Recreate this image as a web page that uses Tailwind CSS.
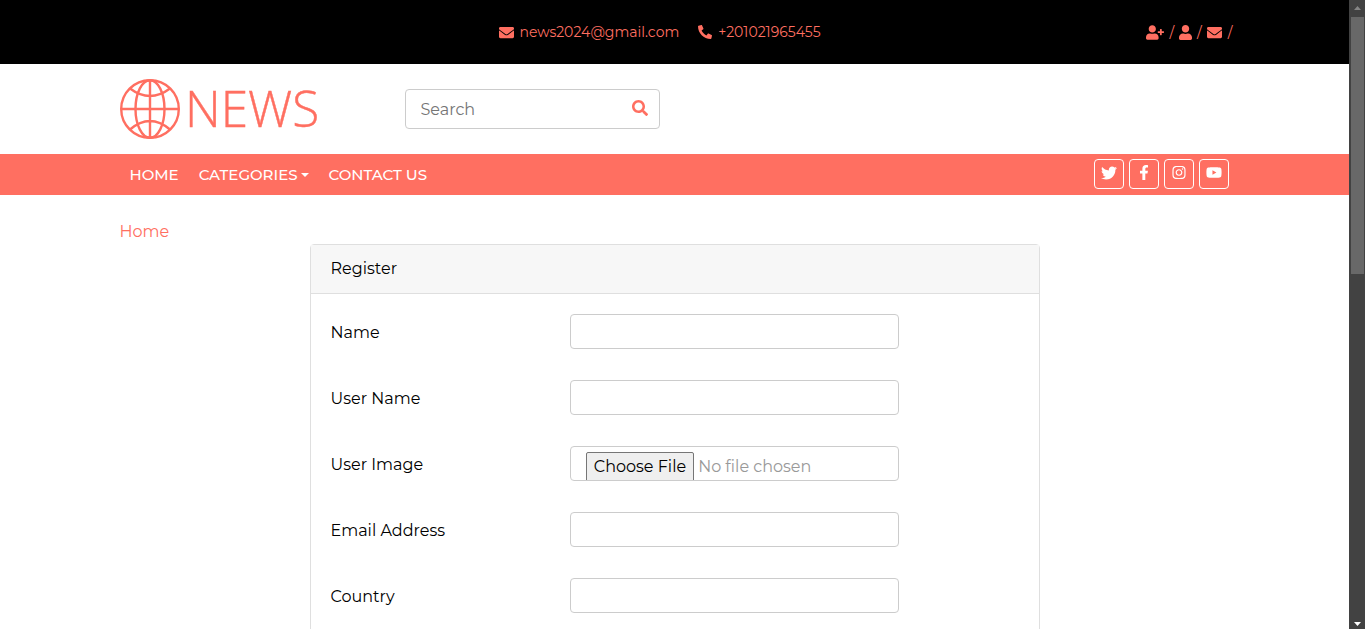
<!DOCTYPE html>
<html lang="en">
<head>
<meta charset="utf-8">
<meta name="viewport" content="width=device-width, initial-scale=1">
<title>News - Register</title>
<script src="https://cdn.jsdelivr.net/npm/@tailwindcss/browser@4"></script>
</head>
<body class="flex h-screen overflow-hidden bg-white font-[Montserrat,Inter,sans-serif] text-base text-black">
<svg class="hidden" aria-hidden="true">
  <symbol id="envelope" viewBox="0 0 512 512"><path d="M502.300 190.800c3.900-3.100 9.700-.2 9.700 4.700V400c0 26.500-21.500 48-48 48H48c-26.500 0-48-21.500-48-48V195.600c0-5 5.700-7.800 9.700-4.700 22.400 17.400 52.100 39.500 154.100 113.600 21.100 15.400 56.700 47.800 92.200 47.600 35.700.3 72-32.800 92.300-47.600 102-74.100 131.600-96.300 154-113.700zM256 320c23.200.4 56.600-29.200 73.400-41.400 132.700-96.300 142.800-104.700 173.400-128.700 5.800-4.500 9.200-11.500 9.200-18.900v-19c0-26.500-21.500-48-48-48H48c-26.500 0-48 21.500-48 48v19c0 7.400 3.400 14.300 9.200 18.900 30.600 23.900 40.700 32.400 173.400 128.700 16.800 12.200 50.200 41.800 73.400 41.400z"/></symbol>
  <symbol id="user" viewBox="0 0 448 512"><path d="M224 256c70.700 0 128-57.300 128-128S294.700 0 224 0 96 57.300 96 128s57.300 128 128 128zm89.600 32h-16.700c-22.200 10.200-46.900 16-72.900 16s-50.600-5.800-72.900-16h-16.700C60.200 288 0 348.200 0 422.400V464c0 26.500 21.500 48 48 48h352c26.500 0 48-21.500 48-48v-41.600c0-74.200-60.200-134.400-134.400-134.400z"/></symbol>
</svg>

<div class="min-w-0 flex-1">
  <div class="bg-black text-sm text-[#ff6f61]">
    <div class="mx-auto flex h-16 max-w-[1140px] items-center px-[15px]">
      <div class="w-[379px] shrink"></div>
      <div class="flex flex-1 items-center gap-[19px] whitespace-nowrap">
        <a href="mailto:news2024@gmail.com" class="flex items-center gap-[6px]"><svg class="size-[15px]" fill="currentColor"><use href="#envelope"/></svg>news2024@gmail.com</a>
        <a href="tel:+201021965455" class="flex items-center gap-[6px]"><svg class="size-[14px]" fill="currentColor" viewBox="0 0 512 512"><path d="M493.400 24.600l-104-24c-11.300-2.600-22.900 3.300-27.500 13.900l-48 112c-4.200 9.800-1.400 21.300 6.900 28l60.600 49.600c-36 76.700-98.900 140.500-177.200 177.200l-49.600-60.600c-6.800-8.300-18.200-11.100-28-6.900l-112 48C3.900 366.500-2 378.100.6 389.400l24 104C27.100 504.200 36.700 512 48 512c256.100 0 464-207.500 464-464 0-11.200-7.700-20.900-18.600-23.400z" transform="matrix(-1 0 0 1 512 0)"/></svg>+201021965455</a>
      </div>
      <div class="-mr-[3px] flex items-center gap-[5px]">
        <a href="#register" aria-label="Register"><svg class="h-[15px] w-[18px]" fill="currentColor" viewBox="0 0 640 512"><path d="M624 208h-64v-64c0-8.800-7.200-16-16-16h-32c-8.800 0-16 7.200-16 16v64h-64c-8.800 0-16 7.200-16 16v32c0 8.800 7.200 16 16 16h64v64c0 8.800 7.200 16 16 16h32c8.800 0 16-7.200 16-16v-64h64c8.800 0 16-7.200 16-16v-32c0-8.800-7.200-16-16-16zm-400 48c70.700 0 128-57.300 128-128S294.700 0 224 0 96 57.300 96 128s57.300 128 128 128zm89.600 32h-16.700c-22.200 10.200-46.900 16-72.900 16s-50.600-5.800-72.900-16h-16.700C60.200 288 0 348.200 0 422.400V464c0 26.500 21.500 48 48 48h352c26.500 0 48-21.500 48-48v-41.600c0-74.200-60.200-134.400-134.400-134.400z"/></svg></a><span>/</span>
        <a href="#login" aria-label="Log in"><svg class="h-[15px] w-[13px]" fill="currentColor"><use href="#user"/></svg></a><span>/</span>
        <a href="#contact" aria-label="Contact" class="pr-px"><svg class="size-[15px]" fill="currentColor"><use href="#envelope"/></svg></a><span>/</span>
      </div>
    </div>
  </div>

  <div class="mx-auto flex h-[90px] max-w-[1140px] items-center px-[15px]">
    <a href="#home" aria-label="News home" class="w-[285px]">
      <svg class="h-[60px] w-[210px] overflow-visible" viewBox="0 0 210 60" fill="none" stroke="#ff6f61" stroke-width="2.4">
        <circle cx="30" cy="30" r="28.800"/>
        <ellipse cx="30" cy="30" rx="14.500" ry="28.800"/>
        <path d="M30 1v58M1 30h58M10 9.500q20 15 40 0M10 50.500q20-17 40 0"/>
        <text x="65" y="48" font-family="Open Sans" font-weight="300" font-size="49.500" fill="#ff6f61" stroke-width="0.4">NEWS</text>
      </svg>
    </a>
    <form class="relative w-[255px]" onsubmit="return false">
      <input type="text" placeholder="Search" aria-label="Search" class="h-10 w-full rounded border border-[#cccccc] px-[15px] placeholder:text-[#757575]">
      <button type="submit" aria-label="Search" class="absolute top-[11px] right-3 text-[#ff6f61]"><svg class="size-4" fill="currentColor" viewBox="0 0 512 512"><path d="M505 442.700L405.300 343c-4.500-4.500-10.600-7-17-7H372c27.600-35.300 44-79.700 44-128C416 93.100 322.900 0 208 0S0 93.100 0 208s93.100 208 208 208c48.300 0 92.700-16.400 128-44v16.300c0 6.400 2.500 12.500 7 17l99.700 99.700c9.400 9.400 24.600 9.400 33.900 0l28.300-28.300c9.400-9.400 9.400-24.600.1-34zM208 336c-70.700 0-128-57.200-128-128 0-70.700 57.200-128 128-128 70.700 0 128 57.200 128 128 0 70.700-57.200 128-128 128z"/></svg></button>
    </form>
  </div>

  <div class="bg-[#ff6f61] text-white">
    <div class="mx-auto flex h-[41px] max-w-[1140px] items-start justify-between px-[15px]">
      <nav class="flex pt-[10px] text-[15px]/[22px] font-medium">
        <a href="#home" class="px-[10px]">HOME</a>
        <button type="button" class="flex items-center gap-[3px] px-[10px]">CATEGORIES<svg class="h-1 w-2" viewBox="0 0 8 4" fill="currentColor"><path d="M0 0h8L4 4z"/></svg></button>
        <a href="#contact" class="px-[10px]">CONTACT US</a>
      </nav>
      <div class="mr-px flex gap-[5px] pt-[5px]">
        <a href="#twitter" aria-label="Twitter" class="flex h-[30px] w-[30px] justify-center rounded border border-white pt-[5px]"><svg class="size-4" fill="currentColor" viewBox="0 0 512 512"><path d="M459.370 151.716c.325 4.548.325 9.097.325 13.645 0 138.720-105.583 298.558-298.558 298.558-59.452 0-114.680-17.219-161.137-47.106 8.447.974 16.568 1.299 25.340 1.299 49.055 0 94.213-16.568 130.274-44.832-46.132-.975-84.792-31.188-98.112-72.772 6.498.974 12.995 1.624 19.818 1.624 9.421 0 18.843-1.300 27.614-3.573-48.081-9.747-84.143-51.980-84.143-102.985v-1.299c13.969 7.797 30.214 12.670 47.431 13.319-28.264-18.843-46.781-51.005-46.781-87.391 0-19.492 5.197-37.360 14.294-52.954 51.655 63.675 129.300 105.258 216.365 109.807-1.624-7.797-2.599-15.918-2.599-24.040 0-57.828 46.782-104.934 104.934-104.934 30.213 0 57.502 12.670 76.670 33.137 23.715-4.548 46.456-13.320 66.599-25.340-7.798 24.366-24.366 44.833-46.132 57.827 21.117-2.273 41.584-8.122 60.426-16.243-14.292 20.791-32.161 39.308-52.628 54.253z"/></svg></a>
        <a href="#facebook" aria-label="Facebook" class="flex h-[30px] w-[30px] justify-center rounded border border-white pt-[5px]"><svg class="h-[15px] w-4" fill="currentColor" viewBox="0 0 320 512"><path d="M279.140 288l14.220-92.660h-88.910v-60.130c0-25.350 12.420-50.060 52.240-50.060h40.420V6.260S260.430 0 225.360 0c-73.220 0-121.080 44.380-121.080 124.720v70.620H22.890V288h81.390v224h100.170V288z"/></svg></a>
        <a href="#instagram" aria-label="Instagram" class="flex h-[30px] w-[30px] justify-center rounded border border-white pt-[5px]"><svg class="h-[15px] w-4" fill="currentColor" viewBox="0 0 448 512"><path d="M224.100 141c-63.600 0-114.900 51.300-114.900 114.900s51.300 114.900 114.900 114.900S339 319.500 339 255.900 287.700 141 224.100 141zm0 189.600c-41.100 0-74.700-33.500-74.700-74.700s33.500-74.700 74.700-74.700 74.700 33.500 74.700 74.700-33.600 74.700-74.700 74.700zm146.400-194.300c0 14.900-12 26.800-26.800 26.800-14.900 0-26.800-12-26.800-26.800s12-26.800 26.800-26.800 26.800 12 26.800 26.800zm76.100 27.200c-1.700-35.900-9.900-67.700-36.200-93.900-26.200-26.200-58-34.400-93.900-36.200-37-2.100-147.900-2.100-184.900 0-35.800 1.700-67.600 9.900-93.900 36.100s-34.400 58-36.200 93.900c-2.100 37-2.100 147.900 0 184.900 1.700 35.900 9.900 67.700 36.200 93.900s58 34.400 93.900 36.200c37 2.100 147.900 2.100 184.900 0 35.900-1.700 67.700-9.900 93.900-36.200 26.200-26.200 34.400-58 36.200-93.900 2.100-37 2.100-147.800 0-184.800zM398.800 388c-7.800 19.600-22.900 34.700-42.600 42.600-29.500 11.700-99.500 9-132.100 9s-102.700 2.600-132.100-9c-19.600-7.800-34.700-22.900-42.600-42.600-11.700-29.500-9-99.500-9-132.100s-2.600-102.700 9-132.100c7.800-19.600 22.900-34.700 42.600-42.600 29.500-11.700 99.500-9 132.100-9s102.700-2.600 132.100 9c19.600 7.800 34.700 22.900 42.600 42.600 11.700 29.500 9 99.500 9 132.100s2.700 102.700-9 132.100z"/></svg></a>
        <a href="#youtube" aria-label="YouTube" class="flex h-[30px] w-[30px] justify-center rounded border border-white pt-[5px]"><svg class="h-[15px] w-4" fill="currentColor" viewBox="0 0 576 512"><path d="M549.655 124.083c-6.281-23.650-24.787-42.276-48.284-48.597C458.781 64 288 64 288 64S117.220 64 74.629 75.486c-23.497 6.322-42.003 24.947-48.284 48.597-11.412 42.867-11.412 132.305-11.412 132.305s0 89.438 11.412 132.305c6.281 23.650 24.787 41.500 48.284 47.821C117.220 448 288 448 288 448s170.780 0 213.371-11.486c23.497-6.321 42.003-24.171 48.284-47.821 11.412-42.867 11.412-132.305 11.412-132.305s0-89.438-11.412-132.305zm-317.510 213.508V175.185l142.739 81.205-142.739 81.201z"/></svg></a>
      </div>
    </div>
  </div>

  <main class="mx-auto max-w-[1140px] px-[15px] pt-[25px]">
    <a href="#home" class="block w-fit text-[#ff6f61]">Home</a>
    <section class="mx-auto max-w-[730px] rounded border border-[#dfdfdf]">
      <h1 class="border-b border-[#dfdfdf] bg-[#f7f7f7] px-5 py-3">Register</h1>
      <form class="p-5" onsubmit="return false">
        <div class="-mx-[15px] mb-[31px] flex"><label for="name" class="w-1/3 px-[15px] pt-[7px]">Name</label><div class="w-1/2 px-[15px]"><input id="name" type="text" class="block h-[35px] w-full rounded border border-[#cccccc] px-[15px]"></div></div>
        <div class="-mx-[15px] mb-[31px] flex"><label for="username" class="w-1/3 px-[15px] pt-[7px]">User Name</label><div class="w-1/2 px-[15px]"><input id="username" type="text" class="block h-[35px] w-full rounded border border-[#cccccc] px-[15px]"></div></div>
        <div class="-mx-[15px] mb-[31px] flex"><label for="image" class="w-1/3 px-[15px] pt-[7px]">User Image</label><div class="w-1/2 px-[15px]"><input id="image" type="file" class="block h-[35px] w-full overflow-hidden rounded border border-[#cccccc] px-[15px] pt-[5px] text-[#999999] file:mr-1 file:rounded-xs file:border file:border-solid file:border-[#767676] file:bg-[#efefef] file:px-[7px] file:pt-[2px] file:pb-2 file:text-black"></div></div>
        <div class="-mx-[15px] mb-[31px] flex"><label for="email" class="w-1/3 px-[15px] pt-[7px]">Email Address</label><div class="w-1/2 px-[15px]"><input id="email" type="email" class="block h-[35px] w-full rounded border border-[#cccccc] px-[15px]"></div></div>
        <div class="-mx-[15px] mb-[31px] flex"><label for="country" class="w-1/3 px-[15px] pt-[7px]">Country</label><div class="w-1/2 px-[15px]"><input id="country" type="text" class="block h-[35px] w-full rounded border border-[#cccccc] px-[15px]"></div></div>
      </form>
    </section>
  </main>
</div>

<!-- Window scrollbar -->
<div class="flex w-4 shrink-0 flex-col items-center bg-[#424242]" aria-hidden="true">
  <svg class="h-[17px] w-4 shrink-0" viewBox="0 0 16 17"><path d="M5 10h7L8.500 6z" fill="#868686"/></svg>
  <div class="h-[257px] w-[13px] shrink-0 bg-[#686868]"></div>
  <svg class="mt-auto h-[17px] w-4 shrink-0" viewBox="0 0 16 17"><path d="M5 10h7l-3.500 4z" fill="#fff"/></svg>
</div>
</body>
</html>
